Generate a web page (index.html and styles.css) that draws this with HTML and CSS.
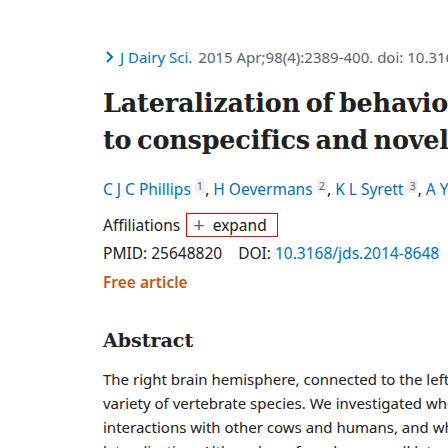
FILE: index.html
```html
<!DOCTYPE html>
<html lang="en">
<head>
<meta charset="utf-8">
<link rel="stylesheet" href="styles.css">
<title>Lateralization of behavior</title>
</head>
<body>
<main class="article">
  <div class="cite">
    <svg class="chev" width="10" height="14" viewBox="0 0 10 14"><path d="M3 2 L8 7 L3 12" fill="none" stroke="#0071bc" stroke-width="2"/></svg>
    <a class="journal" href="#">J Dairy Sci.</a>
    <span class="cit-text">2015 Apr;98(4):2389-400. doi: 10.3168/jds.2014-8648. Epub 2015 Jan 14.</span>
  </div>
  <h1 class="title">Lateralization of behavior in dairy cows in response<br>to conspecifics and novel persons</h1>
  <div class="authors">
    <a href="#">C J C Phillips</a> <sup class="ref">1</sup>, <a href="#">H Oevermans</a> <sup class="ref">2</sup>, <a href="#">K L Syrett</a> <sup class="ref">3</sup>, <a href="#">A Y Jespersen</a> <sup class="ref">4</sup>, <a href="#">G P Pearce</a> <sup class="ref">5</sup>
  </div>
  <div class="affil">Affiliations <button class="expand"><span class="plus">+</span> expand</button></div>
  <div class="ids"><span>PMID: 25648820</span><span>DOI: <a href="#">10.3168/jds.2014-8648</a></span></div>
  <div class="free">Free article</div>
  <h2 class="abs-title">Abstract</h2>
  <p class="abstract">The right brain hemisphere, connected to the left eye, is specialized for responses to novel stimuli in a<br>variety of vertebrate species. We investigated whether dairy cows preferentially use the left eye in<br>interactions with other cows and humans, and whether this could be used to detect behavioral<br>lateralization. Although we found no overall lateralization of behavior in the herd, individual cows</p>
</main>
</body>
</html>
```
FILE: styles.css
```css
html, body { margin: 0; padding: 0; background: #fff; overflow: hidden; }
body { font-family: "Noto Sans", "Open Sans", sans-serif; color: #212121; }
.article { padding: 45px 0 0 103px; width: 1200px; }
a { color: #0071bc; text-decoration: none; }
.cite { display: flex; align-items: center; gap: 6px; font-size: 15px; line-height: 24px; height: 24px; color: #5b616b; white-space: nowrap; }
.chev { flex: none; margin-left: 1px; }
.title { font-family: "DejaVu Serif", serif; font-weight: 700; font-size: 25.5px; line-height: 37px; letter-spacing: -0.2px; word-spacing: -3px; margin: 16px 0 0; color: #212121; }
.authors { margin-top: 18px; font-size: 15.5px; line-height: 24px; height: 24px; white-space: nowrap; color: #212121; }
.ref { display: inline-block; font-size: 11px; line-height: 14px; background: #f1f1f1; color: #5b616b; padding: 0 2px; vertical-align: 5px; }
.affil { margin-top: 12px; font-size: 15.5px; line-height: 24px; height: 24px; display: flex; align-items: center; gap: 6px; }
.expand { font: inherit; color: #212121; background: #fff; border: 1.5px solid #e00; padding: 0 10px 0 6px; height: 24px; display: inline-flex; align-items: center; gap: 8px; }
.plus { color: #5b616b; font-size: 20px; line-height: 1; }
.ids { margin-top: 4px; font-size: 15.5px; line-height: 24px; display: flex; gap: 16px; white-space: nowrap; }
.free { margin-top: 5px; font-size: 15.5px; line-height: 24px; color: #bb5a12; font-weight: 600; }
.abs-title { font-family: "DejaVu Serif", serif; font-weight: 700; font-size: 19px; line-height: 28px; margin: 32px 0 0; }
.abstract { margin: 13px 0 0; font-size: 15px; line-height: 24px; white-space: nowrap; }
```
